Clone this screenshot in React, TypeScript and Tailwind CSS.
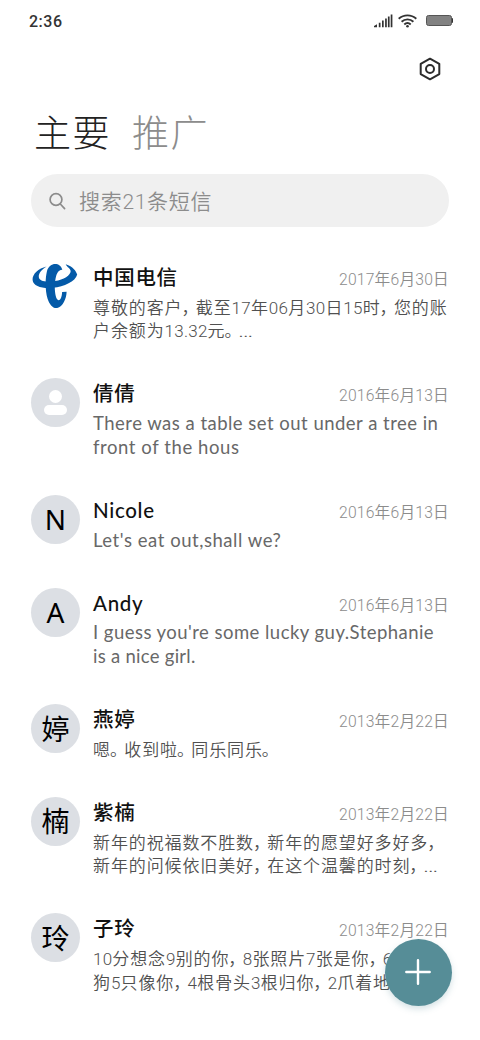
import { Fragment } from "react";
import type { ReactNode } from "react";

interface Line {
    text: string;
    className?: string;
}

interface Message {
    name: string;
    date: string;
    avatar: ReactNode;
    lines: Line[];
}

function TelecomLogo() {
    return (
        <svg viewBox="0 0 49 49" className="size-[49px]" fill="#045aa8">
            <path d="M15.500 4.500C7.500 6.500 1.200 12 1.600 18c.5 6.500 10 8.800 20.400 7.800C33 24.700 44.500 19.500 46.200 12.500c-1.200-3.500-4.200-8-11.500-10.300 1 3.200 6 4.300 4.800 8.100-1.800 5-10 8.400-18.500 9.200-7.500.7-13-.6-13.200-4.400C7.600 11 10.500 7.600 15.500 4.500z" />
            <path d="M31.300 7.800C29.500 0 18.500-.3 16 9c-2 8-1.800 20 .5 27.500 2 6.200 5.600 10.300 9.700 9.500 5.500-1.100 9.400-9.500 9.400-16.300l-4.500.4c-.2 4.500-1.400 7.900-3.400 8.100-3.300.2-4.700-11.200-3.500-19.200.8-6.200 2.300-10.800 7.100-11.200z" />
        </svg>
    );
}

function ContactAvatar() {
    return (
        <div className="flex size-[49px] flex-col items-center rounded-full bg-[#dcdfe4] pt-[11.500px]">
            <div className="size-[13.500px] rounded-full bg-white" />
            <div className="mt-[1.500px] h-[10.500px] w-[23px] rounded-full bg-white" />
        </div>
    );
}

function LetterAvatar({ text }: { text: string }) {
    return (
        <div className="flex size-[49px] items-center justify-center rounded-full bg-[#dcdfe4] font-['Noto_Sans','Noto_Sans_CJK_SC',sans-serif] text-[28px] leading-none text-black">
            {text}
        </div>
    );
}

const messages: Message[] = [
    {
        name: "中国电信",
        date: "2017年6月30日",
        avatar: <TelecomLogo />,
        lines: [
            { text: "尊敬的客户，截至17年06月30日15时，您的账" },
            { text: "户余额为13.32元。…" },
        ],
    },
    {
        name: "倩倩",
        date: "2016年6月13日",
        avatar: <ContactAvatar />,
        lines: [
            { text: "There was a table set out under a tree in", className: "tracking-[0.48px]" },
            { text: "front of the hous", className: "tracking-[0.58px]" },
        ],
    },
    {
        name: "Nicole",
        date: "2016年6月13日",
        avatar: <LetterAvatar text="N" />,
        lines: [{ text: "Let's eat out,shall we?", className: "tracking-[0.54px]" }],
    },
    {
        name: "Andy",
        date: "2016年6月13日",
        avatar: <LetterAvatar text="A" />,
        lines: [
            { text: "I guess you're some lucky guy.Stephanie", className: "tracking-[0.46px]" },
            { text: "is a nice girl.", className: "tracking-[0.27px]" },
        ],
    },
    {
        name: "燕婷",
        date: "2013年2月22日",
        avatar: <LetterAvatar text="婷" />,
        lines: [{ text: "嗯。收到啦。同乐同乐。" }],
    },
    {
        name: "紫楠",
        date: "2013年2月22日",
        avatar: <LetterAvatar text="楠" />,
        lines: [
            { text: "新年的祝福数不胜数，新年的愿望好多好多，" },
            { text: "新年的问候依旧美好，在这个温馨的时刻，…" },
        ],
    },
    {
        name: "子玲",
        date: "2013年2月22日",
        avatar: <LetterAvatar text="玲" />,
        lines: [
            { text: "10分想念9别的你，8张照片7张是你，6条" },
            { text: "狗5只像你，4根骨头3根归你，2爪着地" },
        ],
    },
];

// punctuation takes half a cell and digits are set tighter than the characters around them
function TightText({ text }: { text: string }) {
    return text.split(/([，。…]|[\d.]+)/).map((part, i) => {
        if (part === "，" || part === "。") {
            return (
                <span key={i} className="mr-[5px] -ml-px [font-feature-settings:'halt']">
                    {part}
                </span>
            );
        }
        if (part === "…") {
            return (
                <span key={i} className="-ml-px inline-block origin-left scale-x-140 leading-none">
                    {part}
                </span>
            );
        }
        if (/^\d/.test(part)) {
            return <span key={i} className="tracking-[0.25px]">{part}</span>;
        }
        return <Fragment key={i}>{part}</Fragment>;
    });
}

function StatusBar() {
    return (
        <div className="flex h-[42px] items-center justify-between pr-[27px] pl-[29px] text-[#333]">
            <span className="pt-px font-['Roboto',sans-serif] text-[16px] font-medium tracking-[0.5px]">2:36</span>
            <div className="flex items-center">
                <svg width="19" height="14" viewBox="0 0 19 14" fill="currentColor">
                    <path d="M0 13.200V12l3-1.700v2.900zM4.800 8.800h1.700v4.400H4.800zM8 6.500h1.700v6.700H8zM11.100 4.600h1.700v8.600h-1.700zM13.900 2.500h1.700v10.700h-1.700zM16.700.6h1.700v12.600h-1.700z" />
                </svg>
                <svg width="19" height="14" viewBox="0 0 19 14" className="ml-[5px]" fill="none" stroke="currentColor" strokeWidth="1.900">
                    <path d="M.7 4.800c5-4.600 12.600-4.600 17.600 0M3.600 7.800c3.300-3.200 8.500-3.200 11.800 0M6.300 10.500c1.900-1.800 4.500-1.800 6.400 0" />
                    <circle cx="9.500" cy="12.300" r="1.300" fill="currentColor" stroke="none" />
                </svg>
                <div className="mb-px ml-[9px] h-[11px] w-[26px] rounded-[2.500px] border border-[#555] bg-[#828282]" />
                <div className="mb-px h-[5px] w-[1.500px] rounded-r-sm bg-[#333]" />
            </div>
        </div>
    );
}

function MessageRow({ message }: { message: Message }) {
    return (
        <div className="flex gap-[13px] pb-[35.600px]">
            <div className="h-[49px] w-[49px] shrink-0">{message.avatar}</div>
            <div className="min-w-0 flex-1">
                <div className="flex h-[33.800px] items-start justify-between">
                    <span className="font-['Lato','Noto_Sans_CJK_SC',sans-serif] text-[20.500px] leading-[31px] font-medium tracking-[0.7px] text-[#111]">
                        {message.name}
                    </span>
                    <span className="pt-[2px] font-['Roboto','Noto_Sans_CJK_SC',sans-serif] text-[15.700px] leading-[31px] font-[350] tracking-[0.2px] text-[#8c8c8c]">
                        {message.date}
                    </span>
                </div>
                {message.lines.map((line) => (
                    <p
                        key={line.text}
                        className={`h-[23.500px] whitespace-nowrap ${
                            line.className
                                ? `font-['Lato',sans-serif] text-[18.500px] leading-[23px] text-[#686868] ${line.className}`
                                : "font-['Roboto','Noto_Sans_CJK_SC',sans-serif] text-[17px] leading-[24px] font-[350] tracking-[0.88px] text-[#505050]"
                        }`}
                    >
                        {line.className ? line.text : <TightText text={line.text} />}
                    </p>
                ))}
            </div>
        </div>
    );
}

export default function App() {
    return (
        <div lang="zh-CN" className="relative h-[1040px] w-[480px] overflow-hidden bg-white">
            <StatusBar />
            <div className="flex h-[54px] items-center justify-end pr-[39px]">
                <svg width="22" height="24" viewBox="0 0 22 24" fill="none" stroke="#2c2c2c" strokeWidth="2" strokeLinejoin="round">
                    <path d="M11 1.700l9.300 5.200v10.200L11 22.300l-9.300-5.200V6.900z" />
                    <circle cx="11" cy="12" r="4" />
                </svg>
            </div>
            <div className="flex h-[78px] items-center gap-[21px] pb-[9px] pl-[34px] font-['Noto_Sans_CJK_SC',sans-serif] text-[37px] leading-[54px] font-light tracking-[1.500px]">
                <span className="text-[#222]">主要</span>
                <span className="text-[#8c8c8c]">推广</span>
            </div>
            <div className="mr-[31px] ml-[31px] flex h-[53px] items-center rounded-full bg-[#f0f0f0] pl-[18px]">
                <svg width="17" height="18" viewBox="0 0 17 18" fill="none" stroke="#8c8c8c" strokeWidth="1.700" strokeLinecap="round">
                    <circle cx="7" cy="7.500" r="5.900" />
                    <path d="M11.300 12l4.300 4.600" />
                </svg>
                <span className="ml-[13px] pt-[4px] font-['Roboto','Noto_Sans_CJK_SC',sans-serif] text-[21px] font-[350] tracking-[0.7px] text-[#8c8c8c]">
                    搜索21条短信
                </span>
            </div>
            <div className="pt-[35px] pr-[31px] pl-[31px]">
                {messages.map((message) => (
                    <MessageRow key={message.name} message={message} />
                ))}
            </div>
            <button className="absolute top-[938.500px] left-[384.500px] flex size-[67px] items-center justify-center rounded-full bg-[#568d97] shadow-[0_3px_6px_rgba(86,141,151,0.25)]">
                <svg width="26" height="26" viewBox="0 0 26 26" stroke="white" strokeWidth="2.400" strokeLinecap="round">
                    <path d="M13 1.300v23.400M1.300 13h23.400" />
                </svg>
            </button>
        </div>
    );
}
